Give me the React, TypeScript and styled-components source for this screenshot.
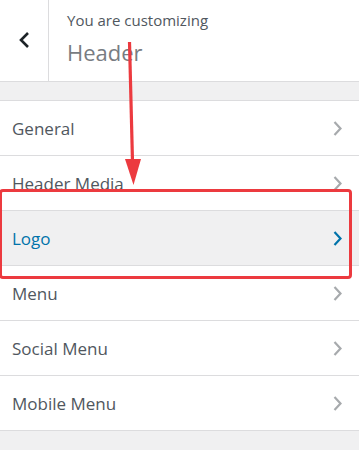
import styled, { createGlobalStyle } from "styled-components";

const GlobalStyle = createGlobalStyle`
  html, body {
    margin: 0;
    padding: 0;
    background: #f0f0f1;
  }
  body {
    font-family: "Open Sans", "Noto Sans", "Liberation Sans", sans-serif;
  }
`;

const Panel = styled.div`
  position: relative;
  width: 359px;
  height: 450px;
  background: #f0f0f1;
  overflow: hidden;
`;

const Header = styled.header`
  display: flex;
  height: 81px;
  background: #fff;
  border-bottom: 1px solid #dcdcde;
`;

const BackButton = styled.button`
  width: 49px;
  flex: none;
  display: flex;
  align-items: center;
  justify-content: center;
  padding: 0 0 2px 0;
  border: none;
  border-right: 1px solid #dcdcde;
  background: #fff;
  color: #1d2327;
`;

const TitleBlock = styled.div`
  display: flex;
  flex-direction: column;
  padding: 9px 0 0 18px;
`;

const Eyebrow = styled.span`
  font-size: 15px;
  line-height: 22px;
  color: #50575e;
`;

const Title = styled.h2`
  margin: 6px 0 0;
  font-size: 22px;
  font-weight: 400;
  line-height: 30px;
  color: #787c82;
`;

const Spacer = styled.div`
  height: 18px;
`;

const List = styled.ul`
  list-style: none;
  margin: 0;
  padding: 0;
  border-top: 1px solid #dcdcde;
`;

const Row = styled.li<{ $active?: boolean }>`
  display: flex;
  align-items: center;
  justify-content: space-between;
  height: 55px;
  padding: 0 16px 0 12px;
  border-bottom: 1px solid #dcdcde;
  background: ${({ $active }) => ($active ? "#f0f0f1" : "#fff")};
  color: ${({ $active }) => ($active ? "#0073aa" : "#50575e")};
  font-size: 17px;
  box-sizing: border-box;
`;

const Chevron = styled.svg<{ $active?: boolean }>`
  width: 11px;
  height: 17px;
  color: ${({ $active }) => ($active ? "#0073aa" : "#a7aaad")};
`;

const Highlight = styled.div`
  position: absolute;
  left: -1px;
  top: 189px;
  width: 353px;
  height: 90px;
  box-sizing: border-box;
  border: 3px solid #ec3a3f;
  border-radius: 4px;
  pointer-events: none;
`;

const Arrow = styled.svg`
  position: absolute;
  left: 118px;
  top: 40px;
  width: 30px;
  height: 150px;
  pointer-events: none;
`;

const items = ["General", "Header Media", "Logo", "Menu", "Social Menu", "Mobile Menu"];

export default function App() {
  return (
    <Panel>
      <GlobalStyle />
      <Header>
        <BackButton aria-label="Back">
          <svg width="12" height="18" viewBox="0 0 12 18">
            <path d="M10 2 L3 9 L10 16" fill="none" stroke="currentColor" strokeWidth="2.6" />
          </svg>
        </BackButton>
        <TitleBlock>
          <Eyebrow>You are customizing</Eyebrow>
          <Title>Header</Title>
        </TitleBlock>
      </Header>
      <Spacer />
      <List>
        {items.map((label) => {
          const active = label === "Logo";
          return (
            <Row key={label} $active={active}>
              {label}
              <Chevron $active={active} viewBox="0 0 11 17">
                <path d="M2.5 2 L8.5 8.5 L2.5 15" fill="none" stroke="currentColor" strokeWidth="2.2" />
              </Chevron>
            </Row>
          );
        })}
      </List>
      <Highlight />
      <Arrow viewBox="0 0 30 150">
        <path d="M11.5 2 L14.5 122" stroke="#ec3a3f" strokeWidth="3.2" fill="none" />
        <path d="M7 119 L23 119 L15.5 145 Z" fill="#ec3a3f" />
      </Arrow>
    </Panel>
  );
}
